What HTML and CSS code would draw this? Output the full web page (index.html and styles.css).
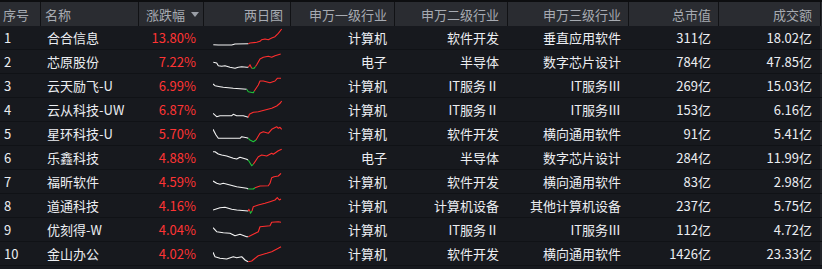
FILE: index.html
```html
<!DOCTYPE html>
<html lang="zh-CN">
<head>
<meta charset="utf-8">
<title>行情</title>
<link rel="stylesheet" href="styles.css">
</head>
<body>
<div class="board">
  <div class="row head">
    <div class="c idx">序号</div>
    <div class="c name">名称</div>
    <div class="c pct">涨跌幅<span class="sort"></span></div>
    <div class="c chart">两日图</div>
    <div class="c r7">申万一级行业</div>
    <div class="c r8">申万二级行业</div>
    <div class="c r7">申万三级行业</div>
    <div class="c r7">总市值</div>
    <div class="c r8">成交额</div>
    <div class="c end"></div>
  </div>

  <div class="row">
    <div class="c idx">1</div><div class="c name">合合信息</div><div class="c pct up">13.80%</div>
    <div class="c spark"><svg viewBox="0 0 70 24" width="70" height="24"><polyline class="w" points="0.3,18.7 5.3,19 18.7,19 22,18 35.3,17.7"/><polyline class="r" points="35.3,17.7 37,17 43.7,16.3 47,15.3 48.7,13.7 52,13 55.3,13.7 58.7,12 62,10.7 65.3,7.3 68.7,3"/></svg></div>
    <div class="c r7">计算机</div><div class="c r8">软件开发</div><div class="c r7">垂直应用软件</div><div class="c r7">311亿</div><div class="c r8">18.02亿</div><div class="c end"></div>
  </div>

  <div class="row">
    <div class="c idx">2</div><div class="c name">芯原股份</div><div class="c pct up">7.22%</div>
    <div class="c spark"><svg viewBox="0 0 70 24" width="70" height="24"><polyline class="w" points="0.3,12.3 3.7,13 5.3,15.7 8.7,16.3 12,15.7 17,17.3 22,18.3 25.3,17.3 28.7,16.7 33.7,17.3 35.3,17.3"/><polyline class="r" points="35.3,17.3 37,14.7 38.7,18.3"/><polyline class="g" points="38.7,18.3 41,18.3 42.5,16.5"/><polyline class="r" points="42.5,16.5 43.7,14.7 47,9 50.3,7.3 55.3,6.3 58.7,7.3 62,5.7 65.3,4.7 67.7,4"/></svg></div>
    <div class="c r7">电子</div><div class="c r8">半导体</div><div class="c r7">数字芯片设计</div><div class="c r7">784亿</div><div class="c r8">47.85亿</div><div class="c end"></div>
  </div>

  <div class="row">
    <div class="c idx">3</div><div class="c name">云天励飞-U</div><div class="c pct up">6.99%</div>
    <div class="c spark"><svg viewBox="0 0 70 24" width="70" height="24"><polyline class="w" points="0,10 2,11.7 7,12.7 10.3,13.3 20.3,14.3 33.7,15.3"/><polyline class="g" points="33.7,15.3 35.3,17.7 40.3,18.7 41.3,17"/><polyline class="r" points="41.3,17 45.3,11 47,7 50.3,7 57,8.7 62,7 64.3,4.3 68,4.3"/></svg></div>
    <div class="c r7">计算机</div><div class="c r8">IT服务Ⅱ</div><div class="c r7">IT服务Ⅲ</div><div class="c r7">269亿</div><div class="c r8">15.03亿</div><div class="c end"></div>
  </div>

  <div class="row">
    <div class="c idx">4</div><div class="c name">云从科技-UW</div><div class="c pct up">6.87%</div>
    <div class="c spark"><svg viewBox="0 0 70 24" width="70" height="24"><polyline class="w" points="0,15.3 3.7,18.7 7,17.7 18.7,17.7 20.3,16.3 23.7,17.7 30.3,17.7 33.7,18.7 35.3,19.3"/><polyline class="r" points="35.3,19.3 36.3,16.3 40.3,14.3 45.3,13.7 52,12 58.7,10.3 63.7,8 67,5.3 68.7,3"/></svg></div>
    <div class="c r7">计算机</div><div class="c r8">IT服务Ⅱ</div><div class="c r7">IT服务Ⅲ</div><div class="c r7">153亿</div><div class="c r8">6.16亿</div><div class="c end"></div>
  </div>

  <div class="row">
    <div class="c idx">5</div><div class="c name">星环科技-U</div><div class="c pct up">5.70%</div>
    <div class="c spark"><svg viewBox="0 0 70 24" width="70" height="24"><polyline class="w" points="0,7.3 3,13 5.3,16.3 13.7,16.3 27,16.3 28.7,14.7 33.7,15.7 35.3,16.3"/><polyline class="g" points="35.3,16.3 37,18 40.3,19.7 43,18"/><polyline class="r" points="43,18 47,11.3 50.3,9.7 55.3,11.3 58.7,7.3 63.7,4.7 65.3,6.3 67,5.3 68.7,7.3"/></svg></div>
    <div class="c r7">计算机</div><div class="c r8">软件开发</div><div class="c r7">横向通用软件</div><div class="c r7">91亿</div><div class="c r8">5.41亿</div><div class="c end"></div>
  </div>

  <div class="row">
    <div class="c idx">6</div><div class="c name">乐鑫科技</div><div class="c pct up">4.88%</div>
    <div class="c spark"><svg viewBox="0 0 70 24" width="70" height="24"><polyline class="w" points="0,5.7 2,5.7 5.3,8 8.7,9 13.7,10 20.3,12.3 23.7,13 27,11.3 30.3,12.3 33.7,13.3 35,14"/><polyline class="g" points="35,14 36.3,15.7 38.7,19.7 40.3,18.3"/><polyline class="r" points="40.3,18.3 45.3,10.7 48.7,9 53.7,10 58.7,7.3 60.3,8.3 65.3,4.7 68.7,3.3"/></svg></div>
    <div class="c r7">电子</div><div class="c r8">半导体</div><div class="c r7">数字芯片设计</div><div class="c r7">284亿</div><div class="c r8">11.99亿</div><div class="c end"></div>
  </div>

  <div class="row">
    <div class="c idx">7</div><div class="c name">福昕软件</div><div class="c pct up">4.59%</div>
    <div class="c spark"><svg viewBox="0 0 70 24" width="70" height="24"><polyline class="w" points="0,11 3.7,13.3 7,14.3 10.3,13.3 17,15 23.7,16.7 33.7,18.3 35.3,19"/><polyline class="g" points="35.3,19 40.3,19 42,17.7"/><polyline class="r" points="42,17.7 47,16 55.3,15.7 57,13.3 58.7,7.7 61,6.7 65.3,6 68,3.3"/></svg></div>
    <div class="c r7">计算机</div><div class="c r8">软件开发</div><div class="c r7">横向通用软件</div><div class="c r7">83亿</div><div class="c r8">2.98亿</div><div class="c end"></div>
  </div>

  <div class="row">
    <div class="c idx">8</div><div class="c name">道通科技</div><div class="c pct up">4.16%</div>
    <div class="c spark"><svg viewBox="0 0 70 24" width="70" height="24"><polyline class="w" points="0,16 7,13.7 12,13.3 18.7,15.3 23.7,16 35.3,17"/><polyline class="r" points="35.3,17 35.8,15.3 37,17.5"/><polyline class="g" points="37,17.5 37.5,19.3 39,17"/><polyline class="r" points="39,17 40.3,12.7 45.3,11 52,9.3 57,7.7 62,6 64.3,3.7 66.3,6 68,5"/></svg></div>
    <div class="c r7">计算机</div><div class="c r8">计算机设备</div><div class="c r7">其他计算机设备</div><div class="c r7">237亿</div><div class="c r8">5.75亿</div><div class="c end"></div>
  </div>

  <div class="row">
    <div class="c idx">9</div><div class="c name">优刻得-W</div><div class="c pct up">4.04%</div>
    <div class="c spark"><svg viewBox="0 0 70 24" width="70" height="24"><polyline class="w" points="0,9.7 3.7,13.7 10.3,14.7 17,15.3 22,17.7 27,16.3 33.7,18.7 35.3,18.7"/><polyline class="r" points="35.3,18.7 45.3,13.7 47,8.7 57,7.7 58.7,4.3 65.3,3.7 68,4.3"/></svg></div>
    <div class="c r7">计算机</div><div class="c r8">IT服务Ⅱ</div><div class="c r7">IT服务Ⅲ</div><div class="c r7">112亿</div><div class="c r8">4.72亿</div><div class="c end"></div>
  </div>

  <div class="row">
    <div class="c idx">10</div><div class="c name">金山办公</div><div class="c pct up">4.02%</div>
    <div class="c spark"><svg viewBox="0 0 70 24" width="70" height="24"><polyline class="w" points="0,10.3 2,14.7 7,16.3 13.7,17 20.3,14.7 23.7,15.7 28.7,14.7 32,18 33.7,19 35.3,19.7"/><polyline class="r" points="35.3,19.7 38.7,19 45.3,13.7 53.7,11.3 58.7,9.7 65.3,6.3 68,4.7"/></svg></div>
    <div class="c r7">计算机</div><div class="c r8">软件开发</div><div class="c r7">横向通用软件</div><div class="c r7">1426亿</div><div class="c r8">23.33亿</div><div class="c end"></div>
  </div>
</div>
</body>
</html>
```
FILE: styles.css
```css
html, body {
  margin: 0;
  padding: 0;
  background: #17191e;
}
.board {
  width: 822px;
  height: 269px;
  padding-top: 2px;
  box-sizing: border-box;
  background: #17191e;
  font-family: "Noto Sans CJK SC", "Microsoft YaHei", sans-serif;
  font-size: 13px;
  color: #eceef2;
  box-shadow: inset 0 2px 0 #0d0e10;
}
.row {
  display: grid;
  grid-template-columns: 40px 98px 65px 87px 104px 113px 121px 90px 102px 2px;
  height: 24px;
  box-sizing: border-box;
  border-bottom: 1px solid #101216;
}
.row.head {
  background: #2a2c31;
  color: #a7abb2;
  border-bottom: 0;
}
.c {
  display: flex;
  align-items: center;
  white-space: nowrap;
  overflow: hidden;
  box-sizing: border-box;
  line-height: 1;
}
.head .c + .c {
  border-left: 1px solid #111215;
}
.idx { padding-left: 4px; }
.name { padding-left: 7px; }
.head .idx { padding-left: 3px; }
.head .name { padding-left: 4px; }
.pct, .chart, .r7, .r8 { justify-content: flex-end; }
.pct { padding-right: 7px; }
.head .pct { padding-right: 4px; }
.chart { padding-right: 7px; }
.r7 { padding-right: 7px; }
.r8 { padding-right: 8px; }
.up { color: #ff3434; }
.sort {
  width: 0;
  height: 0;
  margin-left: 6px;
  border-left: 4px solid transparent;
  border-right: 4px solid transparent;
  border-top: 5px solid #9a9ea6;
}
.end { background: #222429; }
.head .end { background: #2a2c31; }
.spark { padding-left: 10px; }
.spark svg { display: block; }
.spark polyline {
  fill: none;
  stroke-width: 1.1;
  stroke-linejoin: round;
}
.spark .w { stroke: #f4f4f4; }
.spark .r { stroke: #ff2e2e; }
.spark .g { stroke: #1fc43a; }
```
